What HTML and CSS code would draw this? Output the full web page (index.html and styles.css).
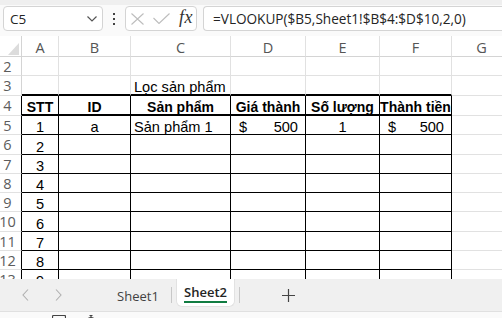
FILE: index.html
```html
<!DOCTYPE html>
<html lang="vi">

<head>
    <meta charset="UTF-8">
    <meta name="viewport" content="width=device-width, initial-scale=1.0">
    <title>Sheet2</title>
    <link rel="stylesheet" href="styles.css">
</head>

<body>
    <div class="ribbon-edge"></div>

    <div class="formula-bar">
        <div class="name-box">
            <span>C5</span>
            <svg class="chevron" width="10" height="6" viewBox="0 0 10 6">
                <path d="M0.5 0.5 L5 5 L9.5 0.5" fill="none" stroke="#555" stroke-width="1.2" />
            </svg>
        </div>
        <div class="more-dots"><i></i><i></i><i></i></div>
        <div class="fx-box">
            <svg width="13" height="12" viewBox="0 0 13 12">
                <path d="M0.5 0.5 L12.5 11.5 M12.5 0.5 L0.5 11.5" stroke="#bdbdbd" stroke-width="1.1" />
            </svg>
            <svg width="17" height="11" viewBox="0 0 17 11">
                <path d="M0.5 5 L6 10.5 L16.5 0.5" fill="none" stroke="#bdbdbd" stroke-width="1.1" />
            </svg>
            <span class="fx">fx</span>
        </div>
        <div class="formula-input">=VLOOKUP($B5,Sheet1!$B$4:$D$10,2,0)</div>
    </div>

    <div class="sheet">
        <!-- column headers -->
        <div class="corner"><span class="corner-mark"></span></div>
        <div class="col-head">A</div>
        <div class="col-head">B</div>
        <div class="col-head">C</div>
        <div class="col-head">D</div>
        <div class="col-head">E</div>
        <div class="col-head">F</div>
        <div class="col-head">G</div>

        <!-- row 2 -->
        <div class="row-head">2</div>
        <div class="cell"></div><div class="cell"></div><div class="cell"></div><div class="cell"></div>
        <div class="cell"></div><div class="cell"></div><div class="cell"></div>

        <!-- row 3 -->
        <div class="row-head">3</div>
        <div class="cell above"></div>
        <div class="cell above"></div>
        <div class="cell above spill">Lọc sản phẩm</div>
        <div class="cell above"></div>
        <div class="cell above"></div>
        <div class="cell above"></div>
        <div class="cell"></div>

        <!-- row 4 : table head -->
        <div class="row-head edge">4</div>
        <div class="cell tb head">STT</div>
        <div class="cell tb head">ID</div>
        <div class="cell tb head">Sản phẩm</div>
        <div class="cell tb head">Giá thành</div>
        <div class="cell tb head">Số lượng</div>
        <div class="cell tb head">Thành tiền</div>
        <div class="cell"></div>

        <!-- row 5 -->
        <div class="row-head edge">5</div>
        <div class="cell tb mid">1</div>
        <div class="cell tb mid">a</div>
        <div class="cell tb">Sản phẩm 1</div>
        <div class="cell tb money"><span>$</span><span>500</span></div>
        <div class="cell tb mid">1</div>
        <div class="cell tb money"><span>$</span><span>500</span></div>
        <div class="cell"></div>

        <div class="row-head edge">6</div>
        <div class="cell tb mid">2</div><div class="cell tb"></div><div class="cell tb"></div>
        <div class="cell tb"></div><div class="cell tb"></div><div class="cell tb"></div><div class="cell"></div>

        <div class="row-head edge">7</div>
        <div class="cell tb mid">3</div><div class="cell tb"></div><div class="cell tb"></div>
        <div class="cell tb"></div><div class="cell tb"></div><div class="cell tb"></div><div class="cell"></div>

        <div class="row-head edge">8</div>
        <div class="cell tb mid">4</div><div class="cell tb"></div><div class="cell tb"></div>
        <div class="cell tb"></div><div class="cell tb"></div><div class="cell tb"></div><div class="cell"></div>

        <div class="row-head edge">9</div>
        <div class="cell tb mid">5</div><div class="cell tb"></div><div class="cell tb"></div>
        <div class="cell tb"></div><div class="cell tb"></div><div class="cell tb"></div><div class="cell"></div>

        <div class="row-head edge">10</div>
        <div class="cell tb mid">6</div><div class="cell tb"></div><div class="cell tb"></div>
        <div class="cell tb"></div><div class="cell tb"></div><div class="cell tb"></div><div class="cell"></div>

        <div class="row-head edge">11</div>
        <div class="cell tb mid">7</div><div class="cell tb"></div><div class="cell tb"></div>
        <div class="cell tb"></div><div class="cell tb"></div><div class="cell tb"></div><div class="cell"></div>

        <div class="row-head edge">12</div>
        <div class="cell tb mid">8</div><div class="cell tb"></div><div class="cell tb"></div>
        <div class="cell tb"></div><div class="cell tb"></div><div class="cell tb"></div><div class="cell"></div>

        <div class="row-head edge">13</div>
        <div class="cell tb mid">9</div><div class="cell tb"></div><div class="cell tb"></div>
        <div class="cell tb"></div><div class="cell tb"></div><div class="cell tb"></div><div class="cell"></div>
    </div>

    <div class="tabs">
        <div class="nav-btn">
            <svg width="7" height="12" viewBox="0 0 7 12">
                <path d="M6 0.5 L1 6 L6 11.5" fill="none" stroke="#b0b0b0" stroke-width="1.1" />
            </svg>
        </div>
        <div class="nav-btn">
            <svg width="7" height="12" viewBox="0 0 7 12">
                <path d="M1 0.5 L6 6 L1 11.5" fill="none" stroke="#b0b0b0" stroke-width="1.1" />
            </svg>
        </div>
        <div class="tab">Sheet1</div>
        <div class="tab-sep"></div>
        <div class="tab active"><span>Sheet2</span></div>
        <div class="tab-sep"></div>
        <div class="add-sheet">
            <svg width="13" height="13" viewBox="0 0 13 13">
                <path d="M6.5 0 V13 M0 6.5 H13" stroke="#444" stroke-width="1.2" />
            </svg>
        </div>
    </div>

    <div class="status-bar">
        <svg class="status-icon first" width="14" height="14" viewBox="0 0 14 14">
            <rect x="0.5" y="0.5" width="13" height="13" rx="1" fill="none" stroke="#444" stroke-width="1.2" />
        </svg>
        <svg class="status-icon" width="14" height="14" viewBox="0 0 14 14">
            <circle cx="7" cy="7" r="4.5" fill="none" stroke="#444" stroke-width="1.2" />
            <path d="M5.5 0.5 H8.5 M7 0.5 V2.5" stroke="#444" stroke-width="1.2" />
        </svg>
    </div>
</body>

</html>
```

FILE: styles.css
```css
body {
    margin: 0;
    width: 502px;
    height: 318px;
    overflow: hidden;
    background: #ffffff;
    font-family: 'Open Sans', sans-serif;
    color: #242424;
}

.ribbon-edge {
    height: 5px;
    background: #efefef;
}

/* formula bar */

.formula-bar {
    display: flex;
    align-items: flex-start;
    height: 31px;
    padding-top: 1px;
    box-sizing: border-box;
    background: #fafafa;
}

.name-box,
.fx-box,
.formula-input {
    height: 25px;
    box-sizing: border-box;
    border: 1px solid #d4d4d4;
    border-radius: 4px;
    background: #ffffff;
    display: flex;
    align-items: center;
}

.name-box {
    margin-left: 3px;
    width: 100px;
    justify-content: space-between;
    padding: 0 5px 0 6px;
    font-size: 13.5px;
}

.chevron {
    margin-top: 1px;
}

.more-dots {
    width: 2px;
    margin: 7px 8px 0 10px;
    display: flex;
    flex-direction: column;
    gap: 3px;
}

.more-dots i {
    display: block;
    width: 2px;
    height: 2px;
    background: #424242;
}

.fx-box {
    margin-left: 2px;
    width: 72px;
    padding: 0 3px 0 5px;
    gap: 9px;
}

.fx {
    font-family: 'Liberation Serif', serif;
    font-style: italic;
    font-size: 18px;
    color: #333333;
    letter-spacing: 0.5px;
    margin-top: -2px;
}

.formula-input {
    margin-left: 6px;
    flex: 1;
    border-right: none;
    border-radius: 4px 0 0 4px;
    padding-left: 9px;
    font-size: 13.6px;
    white-space: nowrap;
}

/* grid */

.sheet {
    display: grid;
    grid-template-columns: 22px 37px 72px 100px 75px 74px 72px 60px;
    grid-template-rows: 21px 19px 20px 20px 19px 20px 19px 19px 19px 20px 19px 19px 19px;
    height: 243px;
    overflow: hidden;
    background: #ffffff;
}

.corner,
.col-head,
.row-head,
.cell {
    box-sizing: border-box;
    border-right: 1px solid #e1e1e1;
    border-bottom: 1px solid #e1e1e1;
}

.corner {
    position: relative;
    border-right-color: #d4d4d4;
    border-bottom-color: #d4d4d4;
}

.corner-mark {
    position: absolute;
    right: 2px;
    bottom: 1px;
    width: 0;
    height: 0;
    border-left: 11px solid transparent;
    border-bottom: 12px solid #dcdcdc;
}

.col-head {
    display: flex;
    align-items: center;
    justify-content: center;
    font-size: 14.5px;
    color: #555555;
    border-bottom-color: #d4d4d4;
    padding-top: 2px;
}

.row-head {
    display: flex;
    align-items: center;
    justify-content: center;
    padding-right: 6px;
    font-size: 14.5px;
    color: #5c5c5c;
    border-right-color: #d4d4d4;
    white-space: nowrap;
}

.row-head.edge {
    border-right-color: #000000;
}

.cell {
    display: flex;
    align-items: flex-end;
    padding: 0 3px;
    font-family: 'Liberation Sans', Arial, sans-serif;
    font-size: 14.6px;
    line-height: 14px;
    color: #000000;
    white-space: nowrap;
}

.cell.above {
    border-bottom: 2px solid #000000;
}

.cell.spill {
    overflow: visible;
    position: relative;
    z-index: 1;
}

.cell.tb {
    border-right-color: #000000;
    border-bottom-color: #000000;
}

.cell.head {
    font-weight: bold;
    font-size: 14px;
    justify-content: center;
    border-bottom-width: 2px;
    padding: 0;
}

.cell.mid {
    justify-content: center;
}

.cell.money {
    justify-content: space-between;
    padding: 0 7px 0 8px;
}

/* sheet tabs */

.tabs {
    display: flex;
    align-items: flex-start;
    height: 32px;
    background: #f0f0f0;
    padding-left: 9px;
}

.nav-btn {
    width: 33px;
    height: 32px;
    display: flex;
    align-items: center;
    justify-content: center;
}

.tab {
    width: 66px;
    margin-left: 30px;
    padding-top: 8px;
    text-align: center;
    font-size: 13px;
    line-height: 18px;
    color: #424242;
}

.tab-sep {
    width: 1px;
    height: 16px;
    margin-top: 8px;
    background: #c8c8c8;
}

.tab.active {
    width: 59px;
    height: 28px;
    margin: 0 4px;
    padding-top: 4px;
    box-sizing: border-box;
    background: #ffffff;
    border: 1px solid #e2e2e2;
    border-top: none;
    border-radius: 0 0 6px 6px;
    color: #242424;
    font-weight: 600;
}

.tab.active span {
    display: inline-block;
    border-bottom: 2px solid #107c41;
}

.add-sheet {
    margin-left: 33px;
    width: 30px;
    height: 32px;
    display: flex;
    align-items: center;
    justify-content: center;
}

/* status bar */

.status-bar {
    display: flex;
    height: 7px;
    box-sizing: border-box;
    border-top: 1px solid #e0e0e0;
    background: #fafafa;
    padding-top: 3px;
    overflow: hidden;
}

.status-icon {
    flex: none;
    margin-left: 18px;
}

.status-icon.first {
    margin-left: 52px;
}
```
